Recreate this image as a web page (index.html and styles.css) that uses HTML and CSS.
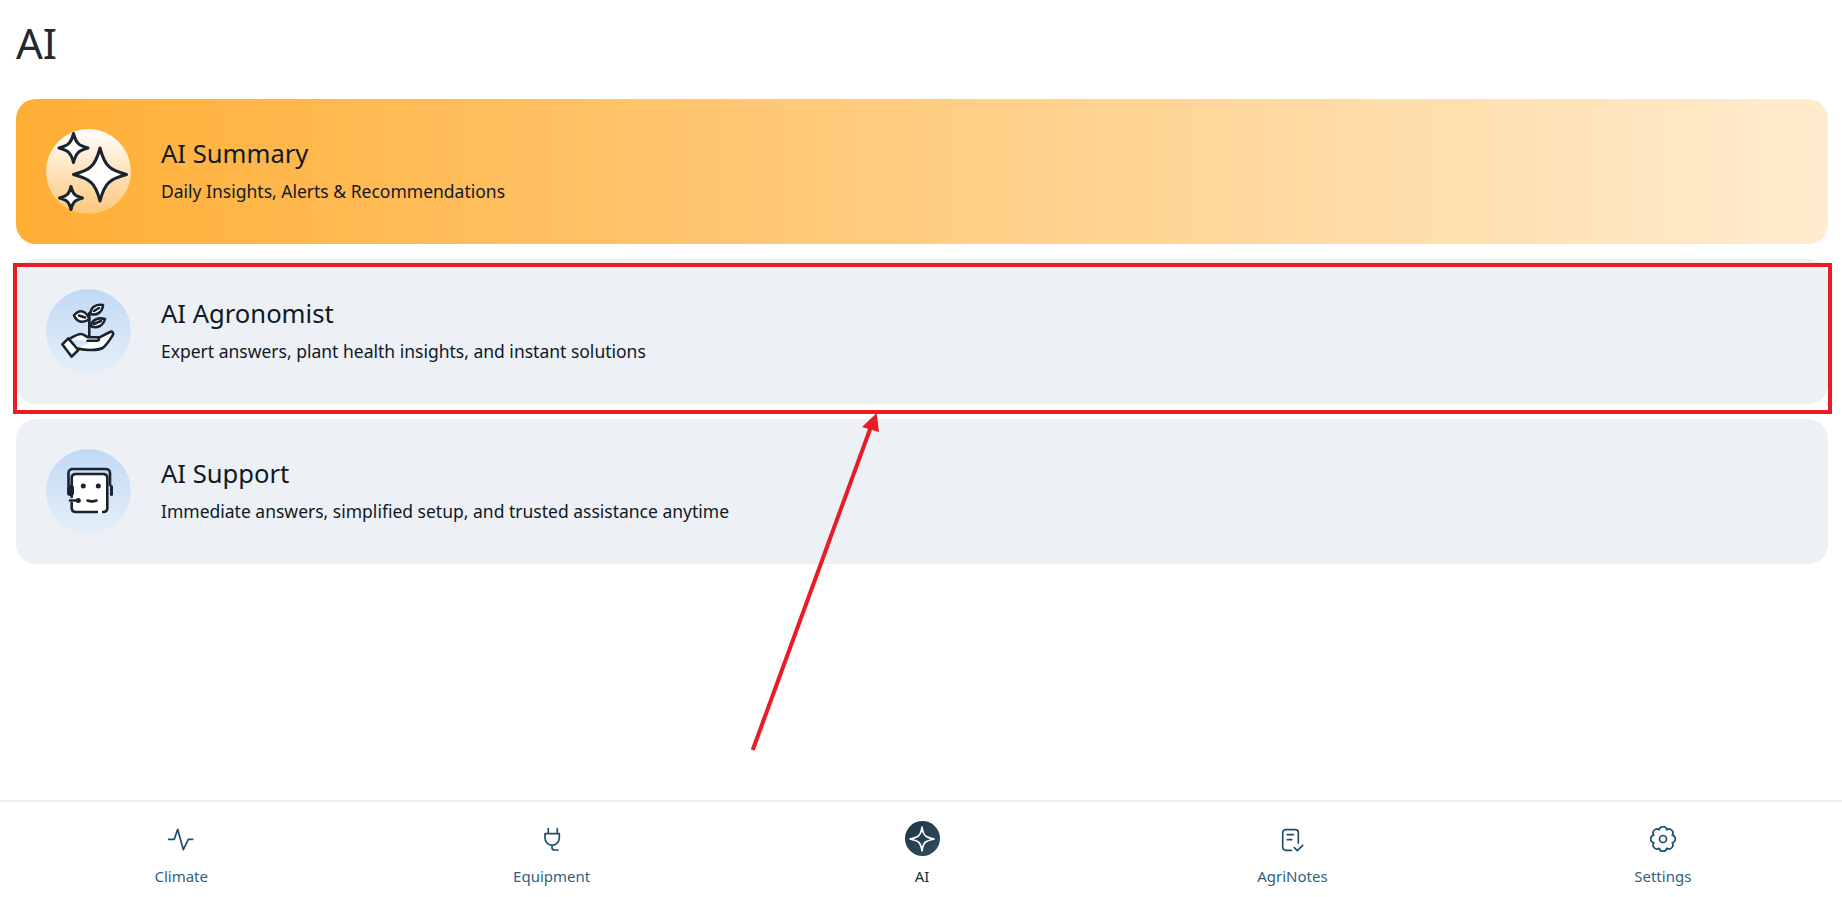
FILE: index.html
```html
<!DOCTYPE html>
<html lang="en">
<head>
    <meta charset="UTF-8">
    <title>AI</title>
    <link rel="stylesheet" href="styles.css">
</head>
<body>
<div class="page">
    <h1>AI</h1>
    <div class="cards">
        <div class="card card-summary">
            <div class="badge badge-summary">
                <svg class="badge-icon" viewBox="0 0 85 85">
                    <path class="star" transform="translate(54 45.5) scale(26.5)" d="M0 -1C.1 -.62 .2 -.42 .34 -.3C.44 -.18 .65 -.1 1 0C.65 .1 .44 .18 .34 .3C.2 .42 .1 .62 0 1C-.1 .62 -.2 .42 -.34 .3C-.44 .18 -.65 .1 -1 0C-.65 -.1 -.44 -.18 -.34 -.3C-.2 -.42 -.1 -.62 0 -1Z"/>
                    <path class="star" transform="translate(27.5 19) scale(14.5)" d="M0 -1C.1 -.62 .2 -.42 .34 -.3C.44 -.18 .65 -.1 1 0C.65 .1 .44 .18 .34 .3C.2 .42 .1 .62 0 1C-.1 .62 -.2 .42 -.34 .3C-.44 .18 -.65 .1 -1 0C-.65 -.1 -.44 -.18 -.34 -.3C-.2 -.42 -.1 -.62 0 -1Z"/>
                    <path class="star" transform="translate(25 69) scale(11.5)" d="M0 -1C.1 -.62 .2 -.42 .34 -.3C.44 -.18 .65 -.1 1 0C.65 .1 .44 .18 .34 .3C.2 .42 .1 .62 0 1C-.1 .62 -.2 .42 -.34 .3C-.44 .18 -.65 .1 -1 0C-.65 -.1 -.44 -.18 -.34 -.3C-.2 -.42 -.1 -.62 0 -1Z"/>
                </svg>
            </div>
            <div class="card-body">
                <div class="card-title">AI Summary</div>
                <div class="card-text">Daily Insights, Alerts &amp; Recommendations</div>
            </div>
        </div>
        <div class="card">
            <div class="badge">
                <svg class="badge-icon" viewBox="0 0 85 85">
                    <path class="line" d="M43.300 47V24"/>
                    <path class="line" d="M28 26.500C33 20 40 21 43.300 30C37 35 31 33 28 26.500Z"/>
                    <path class="line" d="M44.500 25C44.500 18 50 15 57 16C56.500 23 51 27 44.500 25Z"/>
                    <path class="line" d="M44.500 37C46 31 52 28 59 30C57 37 51 40 44.500 37Z"/>
                    <path class="line line-open" d="M33 26.500L39 28.500M48 22L53 19M48 35L55 32"/>
                    <path class="line" d="M16.300 55.300L22.300 49.300L32.300 61L25.700 67.700Z"/>
                    <path class="line" d="M23 50.300C28 47.500 31 45 35 45C38 45 40 48.300 43 48.300H51C53.500 48.300 53.500 51.800 51 51.800H41.500M52.500 48.800L64 43C66.500 41.800 68 44.200 66.700 46.300C63 52 60 57 56.500 59C53 61 48 61 44 61C39 61 36 60.500 31.500 59.500"/>
                </svg>
            </div>
            <div class="card-body">
                <div class="card-title">AI Agronomist</div>
                <div class="card-text">Expert answers, plant health insights, and instant solutions</div>
            </div>
        </div>
        <div class="card">
            <div class="badge">
                <svg class="badge-icon" viewBox="0 0 85 85">
                    <path class="line line-open" d="M22.500 36V24C22.500 21.500 24.500 20 27 20H59.500C62 20 64 21.500 64 24V36"/>
                    <path class="line" d="M25.700 48V29C25.700 26.500 27.500 25 30 25H57C59.500 25 61.300 26.500 61.300 29V59C61.300 61.500 59.500 63 57 63H30C27.500 63 25.700 61.500 25.700 59V54"/>
                    <path class="gap" d="M52 63H56"/>
                    <rect class="dot" x="21" y="36" width="7" height="11" rx="3"/>
                    <rect class="dot" x="64" y="36" width="3" height="11" rx="1.500"/>
                    <circle class="dot" cx="37.300" cy="37" r="2.500"/>
                    <circle class="dot" cx="52.300" cy="37" r="2.500"/>
                    <circle class="dot" cx="32.300" cy="51.500" r="2.500"/>
                    <path class="line line-open" d="M24 51.500H32M41.500 51.500C44.500 52.700 47.500 52.700 50.500 51.500"/>
                </svg>
            </div>
            <div class="card-body">
                <div class="card-title">AI Support</div>
                <div class="card-text">Immediate answers, simplified setup, and trusted assistance anytime</div>
            </div>
        </div>
    </div>
</div>

<nav class="tabs">
    <a class="tab">
        <span class="tab-icon">
            <svg viewBox="0 0 26 26"><path d="M.3 13.300H6.300L9.700 3.300L15.300 23.700L20.300 13.300H24.700"/></svg>
        </span>
        <span>Climate</span>
    </a>
    <a class="tab">
        <span class="tab-icon">
            <svg viewBox="0 0 26 26"><path d="M9.300 2.700V7.700M18.300 2.700V7.700M6 7.700H20.300V12A7.150 7.150 0 0 1 6 12ZM13 19V21.500A2.500 2.500 0 0 0 15.500 24H19"/></svg>
        </span>
        <span>Equipment</span>
    </a>
    <a class="tab tab-active">
        <span class="tab-icon tab-icon-active">
            <svg viewBox="0 0 26 26"><path d="M13 1C13.800 7 15 9 17 10.200C18.500 11.300 20.500 12 25 13C20.500 14 18.500 14.700 17 15.800C15 17 13.800 19 13 25C12.200 19 11 17 9 15.800C7.500 14.700 5.500 14 1 13C5.500 12 7.500 11.300 9 10.200C11 9 12.200 7 13 1Z"/></svg>
        </span>
        <span>AI</span>
    </a>
    <a class="tab">
        <span class="tab-icon">
            <svg viewBox="0 0 26 26"><path d="M12.500 24.300H6.700A3 3 0 0 1 3.700 21.300V6.700A3 3 0 0 1 6.700 3.700H16.300A3 3 0 0 1 19.300 6.700V17M8.300 8.700H14.300M8.300 13.700H12.700M15.300 21.700L18.300 24.700L23.700 19.300"/></svg>
        </span>
        <span>AgriNotes</span>
    </a>
    <a class="tab">
        <span class="tab-icon">
            <svg viewBox="0 0 26 26"><path d="M22.240 9.170A3.900 3.900 0 0 1 22.240 16.830A3.900 3.900 0 0 1 16.830 22.240A3.900 3.900 0 0 1 9.170 22.240A3.900 3.900 0 0 1 3.760 16.830A3.900 3.900 0 0 1 3.760 9.170A3.900 3.900 0 0 1 9.170 3.760A3.900 3.900 0 0 1 16.830 3.760A3.900 3.900 0 0 1 22.240 9.170Z"/><circle cx="13" cy="13" r="3.500"/></svg>
        </span>
        <span>Settings</span>
    </a>
</nav>

<!-- red markup drawn over the screen -->
<div class="mark-box"></div>
<svg class="mark-arrow" viewBox="0 0 1842 897">
    <path d="M752.700 750L870.500 428" />
    <polygon points="876.700,413 862,427 879,432"/>
</svg>
</body>
</html>
```

FILE: styles.css
```css
html, body {
  height: 100%;
}
body {
  margin: 0;
  background: white;
  color: #1f2933;
  font-family: "Noto Sans", sans-serif;
  display: flex;
  flex-direction: column;
  overflow: hidden;
}

.page {
  flex: 1;
  padding: 0 14px 0 16px;
}

h1 {
  margin: 0;
  padding-top: 15px;
  height: 99px;
  box-sizing: border-box;
  font-size: 42px;
  line-height: 55px;
  font-weight: 400;
  color: #24292e;
}

.cards {
  display: flex;
  flex-direction: column;
  gap: 15px;
}

.card {
  height: 145px;
  box-sizing: border-box;
  padding: 0 30px;
  display: flex;
  align-items: center;
  gap: 30px;
  border-radius: 20px;
  background: #edf0f5;
  color: #0f1a24;
}
.card-summary {
  background: linear-gradient(90deg, #ffae35 0%, #ffeccf 100%);
}
.card-body {
  padding-bottom: 3px;
}
.card-title {
  font-size: 25.6px;
  line-height: 34px;
}
.card-text {
  margin-top: 8px;
  font-size: 17.5px;
  line-height: 24px;
}

.badge {
  width: 85px;
  height: 85px;
  flex: none;
  border-radius: 50%;
  background: linear-gradient(180deg, #c1d9f4 0%, #e6eff9 100%);
}
.badge-summary {
  box-shadow: 0 0 0 1px #ffb12e;
  background: linear-gradient(180deg, #ffffff 0%, #fdc67a 100%);
}
.badge-icon {
  display: block;
  width: 85px;
  height: 85px;
}
.star {
  fill: white;
  stroke: #1a2330;
  stroke-width: 3;
  stroke-linejoin: round;
  vector-effect: non-scaling-stroke;
}
.line {
  fill: white;
  stroke: #1a2330;
  stroke-width: 2.6;
  stroke-linecap: round;
  stroke-linejoin: round;
}
.line-open {
  fill: none;
}
.gap {
  fill: none;
  stroke: white;
  stroke-width: 4;
}
.dot {
  fill: #1a2330;
}

.tabs {
  flex: none;
  height: 97px;
  box-sizing: border-box;
  border-top: 2px solid #eeeff1;
  padding-left: 2px;
  display: grid;
  grid-template-columns: repeat(5, 370.4px);
  justify-content: center;
  background: white;
}
.tab {
  display: flex;
  flex-direction: column;
  align-items: center;
  padding-top: 19px;
  font-size: 15px;
  line-height: 20px;
  color: #2f5f80;
}
.tab-active {
  color: #1c2a36;
}
.tab-icon {
  width: 35px;
  height: 35px;
  margin-bottom: 10px;
  display: flex;
  align-items: center;
  justify-content: center;
}
.tab-icon svg {
  width: 26px;
  height: 26px;
  fill: none;
  stroke: #1d4f6d;
  stroke-width: 1.7;
  stroke-linecap: round;
  stroke-linejoin: round;
}
.tab-icon-active {
  border-radius: 50%;
  background: linear-gradient(135deg, #1d3646 0%, #324e62 100%);
}
.tab-icon-active svg {
  stroke: white;
}

.mark-box {
  position: absolute;
  left: 13px;
  top: 263px;
  width: 1819px;
  height: 151px;
  box-sizing: border-box;
  border: 4px solid #e91c23;
}
.mark-arrow {
  position: absolute;
  left: 0;
  top: 0;
  width: 1842px;
  height: 897px;
  pointer-events: none;
}
.mark-arrow path {
  stroke: #e91c23;
  stroke-width: 4;
  fill: none;
}
.mark-arrow polygon {
  fill: #e91c23;
}
```
